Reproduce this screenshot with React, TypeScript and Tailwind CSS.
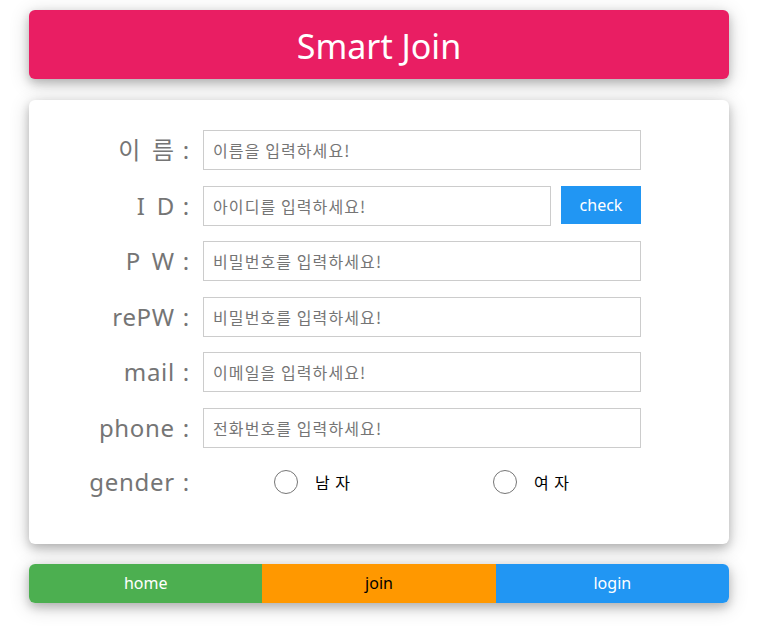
import { useState } from "react";

const fields = [
  { label: "이 름", placeholder: "이름을 입력하세요!" },
  { label: "I D", placeholder: "아이디를 입력하세요!", check: true },
  { label: "P W", placeholder: "비밀번호를 입력하세요!" },
  { label: "rePW", placeholder: "비밀번호를 입력하세요!" },
  { label: "mail", placeholder: "이메일을 입력하세요!" },
  { label: "phone", placeholder: "전화번호를 입력하세요!" },
];

const card =
  "shadow-[0_4px_10px_0_rgba(0,0,0,0.2),0_4px_20px_0_rgba(0,0,0,0.19)]";

function Label({ text }: { text: string }) {
  return (
    <label className="w-[162px] text-right text-[24px] tracking-[0.7px] text-[#757575] pr-[1px] whitespace-pre [word-spacing:4px]">
      {text}
      <span className="ml-[8px]">:</span>
    </label>
  );
}

export default function App() {
  const [gender, setGender] = useState("");

  return (
    <div
      className="min-h-[632px] bg-white pt-[10px] pl-[29px]"
      style={{ fontFamily: '"Noto Sans", "Noto Sans CJK KR", sans-serif' }}
    >
      <div className={`w-[700px] h-[69px] rounded-[6px] bg-[#e91e63] flex items-center justify-center ${card}`}>
        <h1 className="text-white text-[34px] leading-none pt-[2px]">Smart Join</h1>
      </div>

      <div className={`w-[700px] mt-[21px] rounded-[6px] bg-white pt-[30px] pb-[42px] flex flex-col gap-[15.6px] ${card}`}>
        {fields.map((f) => (
          <div key={f.label} className="flex items-center h-[40px]">
            <Label text={f.label} />
            <div className="ml-[12px] flex w-[438px] gap-[10px]">
              <input
                placeholder={f.placeholder}
                className="h-[40px] flex-1 min-w-0 border border-[#ccc] px-[9px] text-[16px] tracking-[1.1px] text-[#333] placeholder:text-[#757575] outline-none"
                style={{ fontFamily: '"Noto Sans CJK KR", sans-serif' }}
              />
              {f.check && (
                <button className="w-[80px] h-[38px] bg-[#2196f3] text-white text-[16px]">
                  check
                </button>
              )}
            </div>
          </div>
        ))}

        <div className="flex items-center h-[40px] -mt-[2px]">
          <Label text="gender" />
          <div className="ml-[12px] grid grid-cols-2 w-[438px]">
            {["남 자", "여 자"].map((g) => (
              <label key={g} className="flex items-center justify-center cursor-pointer">
                <span
                  onClick={() => setGender(g)}
                  className="w-[24px] h-[24px] rounded-full border border-[#767676] flex items-center justify-center"
                >
                  {gender === g && <span className="w-[12px] h-[12px] rounded-full bg-[#2196f3]" />}
                </span>
                <span
                  className="ml-[17px] text-[16px] tracking-[1px] text-black"
                  style={{ fontFamily: '"Noto Sans CJK KR", sans-serif' }}
                >
                  {g}
                </span>
              </label>
            ))}
          </div>
        </div>
      </div>

      <div className={`w-[700px] mt-[20px] h-[39px] rounded-[6px] overflow-hidden grid grid-cols-3 text-[16px] ${card}`}>
        <button className="bg-[#4caf50] text-white">home</button>
        <button className="bg-[#ff9800] text-black">join</button>
        <button className="bg-[#2196f3] text-white">login</button>
      </div>
    </div>
  );
}
